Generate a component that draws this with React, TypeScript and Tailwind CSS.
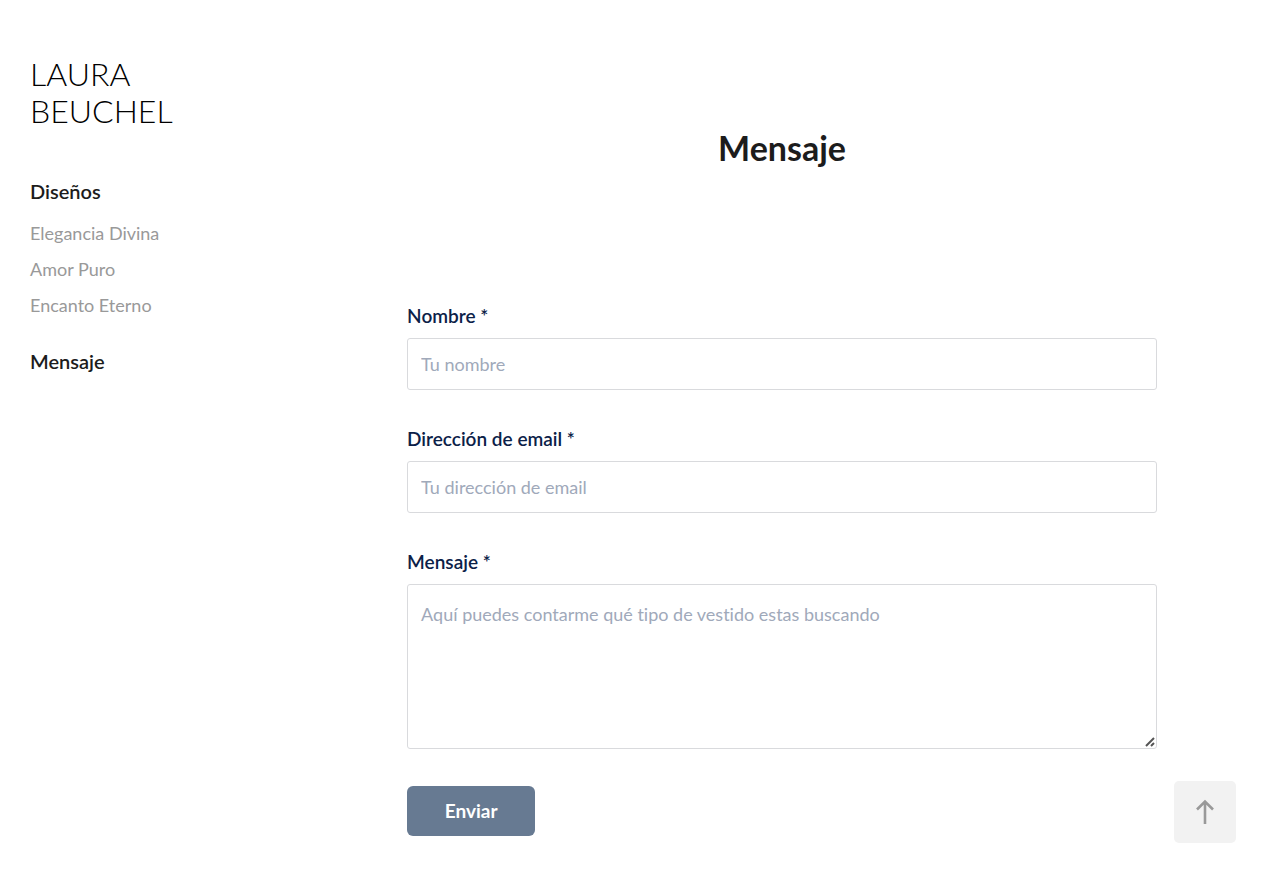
import React from "react";

const designs = ["Elegancia Divina", "Amor Puro", "Encanto Eterno"];

const fieldStyle =
  "block w-full rounded-[3px] border border-[#d9dadd] bg-white px-[13px] text-[18px] text-[#0b1f45] [font-variant-ligatures:none] placeholder:text-[#a0a9ba] placeholder:opacity-100";
const labelStyle = "mb-2 block text-[19px] leading-7 font-semibold text-[#0b2148]";

export default function App() {
  return (
    <div className="flex min-h-screen bg-white font-['Lato',sans-serif] text-[#1c1c1c]">
      <aside className="w-[23%] shrink-0 px-[30px] pt-[55px]">
        <a
          href="#inicio"
          className="block w-40 text-[32px] leading-[37px] font-light text-black"
        >
          LAURA BEUCHEL
        </a>
        <nav className="mt-12">
          <a href="#disenos" className="block text-[20px] leading-7 font-semibold">
            Diseños
          </a>
          <ul className="mt-[10px] text-[18px] leading-[36px] text-[#999999]">
            {designs.map((name) => (
              <li key={name}>
                <a href="#disenos">{name}</a>
              </li>
            ))}
          </ul>
          <a href="#mensaje" className="mt-6 block text-[20px] leading-7 font-semibold">
            Mensaje
          </a>
        </nav>
      </aside>
      <main className="flex-1 pt-[123px] pr-[113px] pl-[115px]">
        <h1 className="text-center text-[34px] leading-[50px] font-bold">Mensaje</h1>
        <form className="mt-[129px]" onSubmit={(e) => e.preventDefault()}>
          <label htmlFor="name" className={labelStyle}>
            Nombre *
          </label>
          <input id="name" placeholder="Tu nombre" className={`${fieldStyle} h-[52px]`} />
          <label htmlFor="email" className={`${labelStyle} mt-[35px]`}>
            Dirección de email *
          </label>
          <input id="email" type="email" placeholder="Tu dirección de email" className={`${fieldStyle} h-[52px]`} />
          <label htmlFor="message" className={`${labelStyle} mt-[35px]`}>
            Mensaje *
          </label>
          <div className="relative">
            <textarea
              id="message"
              placeholder="Aquí puedes contarme qué tipo de vestido estas buscando"
              className={`${fieldStyle} h-[165px] resize-y py-[15px] leading-7 [&::-webkit-resizer]:bg-transparent`}
            />
            <svg
              aria-hidden="true"
              viewBox="0 0 10 10"
              className="pointer-events-none absolute right-[2px] bottom-[2px] size-[10px]"
              fill="none"
              stroke="#555"
              strokeWidth="2"
            >
              <path d="M1 9l8-8M6 9l3-3" />
            </svg>
          </div>
          <button className="mt-[37px] h-[50px] w-32 rounded-[6px] bg-[#677a92] text-[19px] font-bold text-white">
            Enviar
          </button>
        </form>
      </main>
      <button
        aria-label="Volver arriba"
        className="fixed right-[34px] bottom-[27px] flex size-[62px] items-center justify-center rounded-[5px] bg-[#f2f2f2]"
      >
        <svg viewBox="0 0 20 26" className="h-[26px] w-5" fill="none" stroke="#999" strokeWidth="2.6">
          <path d="M10 25V2.5M2 10.5l8-8 8 8" />
        </svg>
      </button>
    </div>
  );
}
